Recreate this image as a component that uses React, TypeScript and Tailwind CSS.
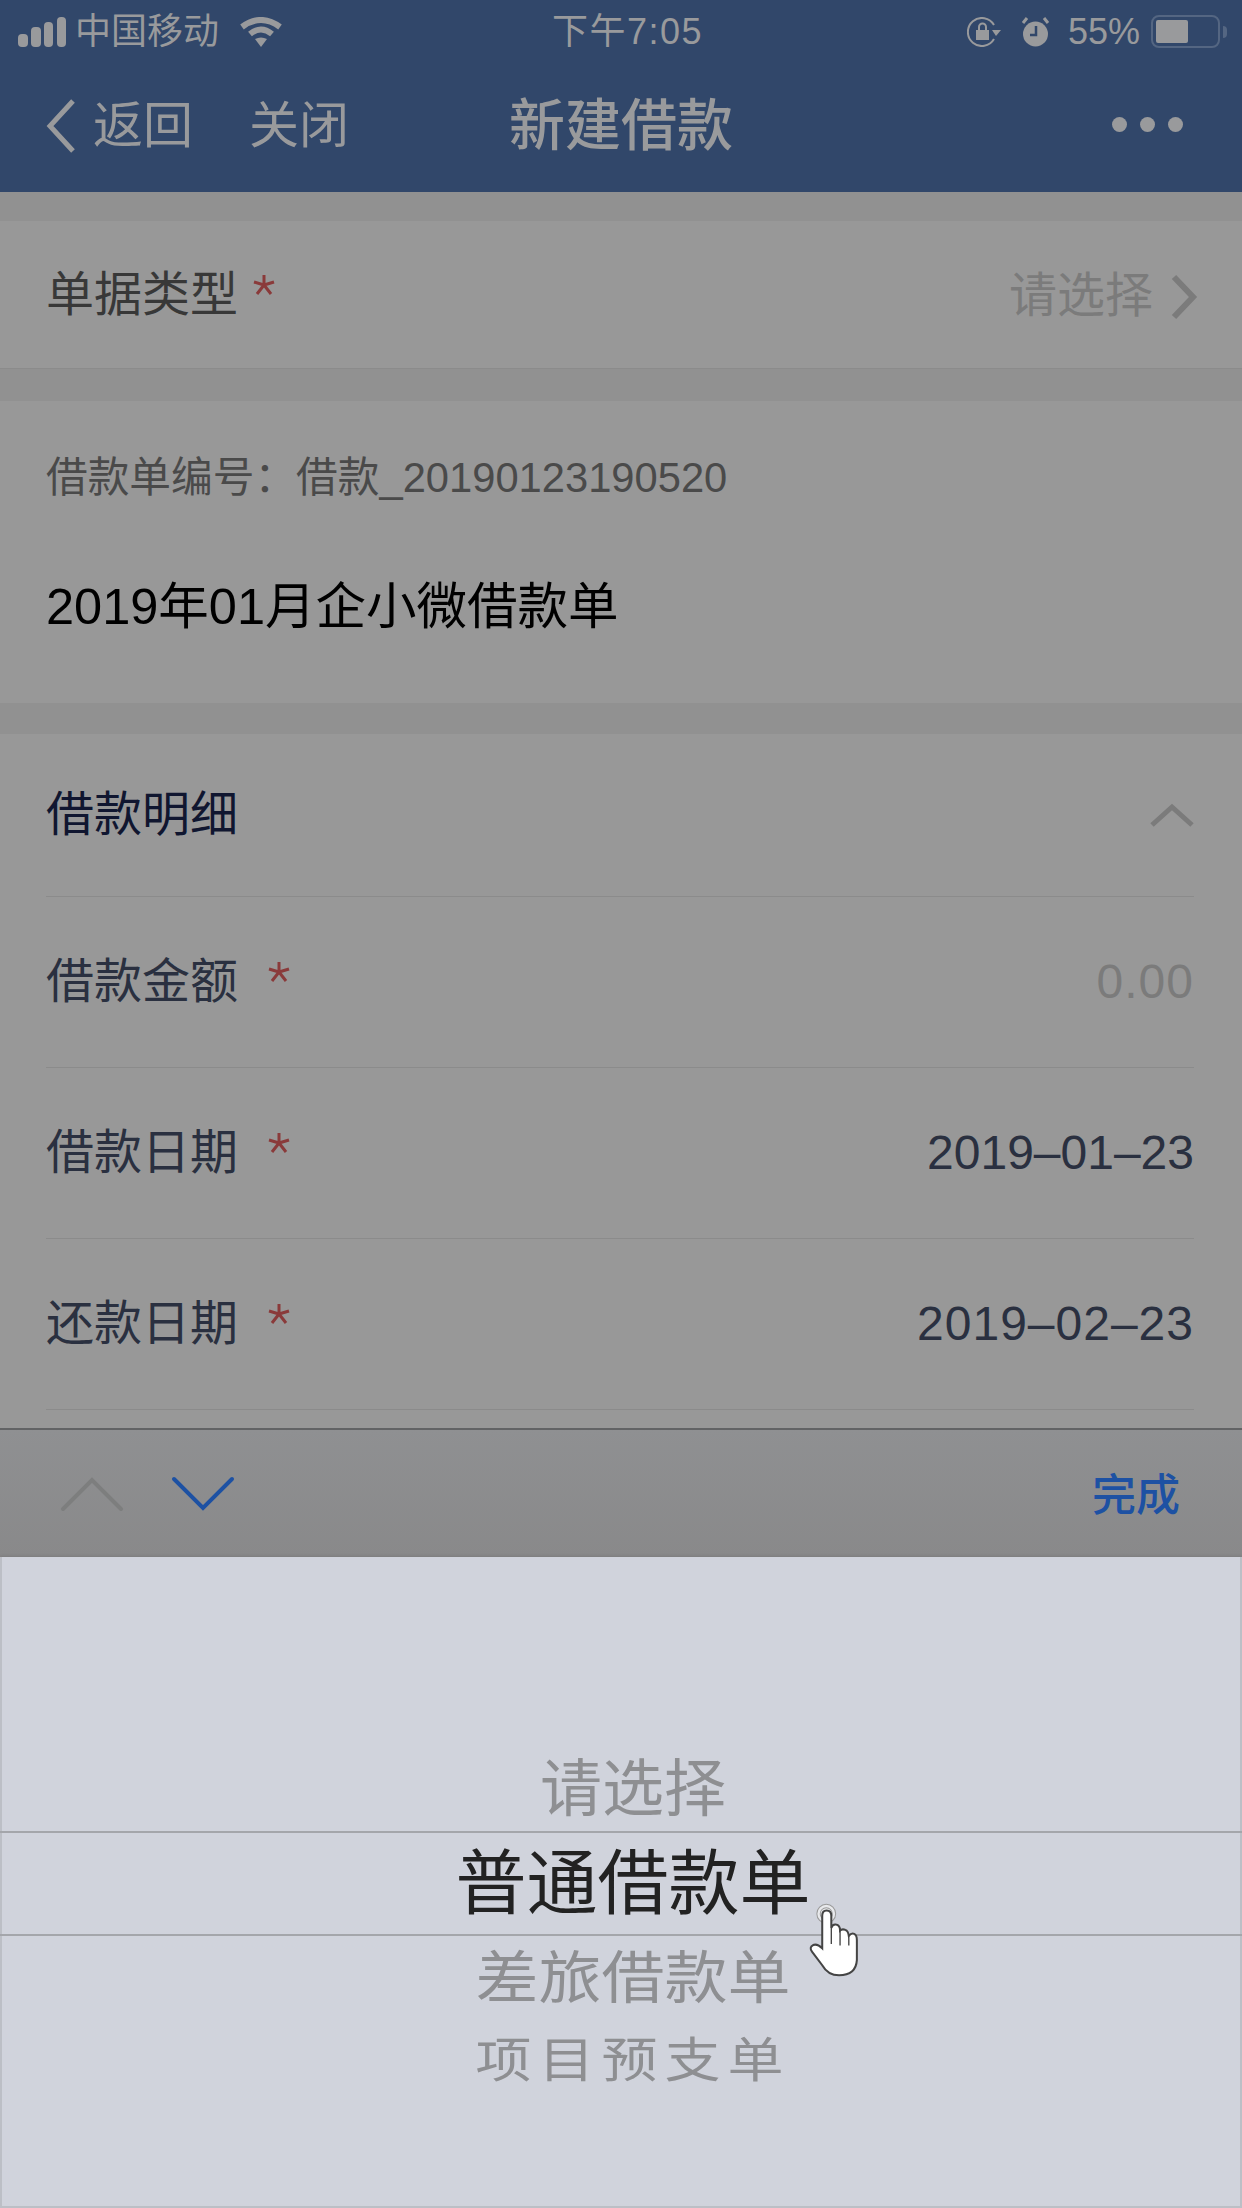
import React from 'react';

const font = { fontFamily: '"Liberation Sans", "Noto Sans CJK SC", sans-serif' };

function StatusBar() {
  return (
    <div className="flex h-[60px] items-center justify-between pl-[18px] pr-[15px] pt-[3px] text-[36px] text-[#999a9c]">
      <div className="flex w-[310px] items-center">
        <svg width="48" height="30" viewBox="0 0 48 30" className="mr-[9px]">
          <rect x="0" y="17" width="10" height="13" rx="4" fill="#999a9c" />
          <rect x="13" y="10" width="10" height="20" rx="4" fill="#999a9c" />
          <rect x="26" y="5" width="9" height="25" rx="4" fill="#999a9c" />
          <rect x="39" y="0" width="9" height="30" rx="4" fill="#999a9c" />
        </svg>
        <span>中国移动</span>
        <svg width="42" height="30" viewBox="0 0 42 30" className="ml-[21px]" fill="none" stroke="#999a9c" strokeWidth="6">
          <path d="M2 10 Q21 -4 40 10" />
          <path d="M10 17 Q21 8 32 17" />
          <path d="M15 22 L21 30 L27 22 Q21 19 15 22 Z" fill="#999a9c" stroke="none" />
        </svg>
      </div>
      <div className="text-[36px] tracking-[1.5px]">下午7:05</div>
      <div className="flex w-[300px] items-center justify-end">
        <svg width="34" height="30" viewBox="0 0 34 30" fill="none" stroke="#999a9c" strokeWidth="2">
          <path d="M27 22 A14 14 0 1 1 27 8" />
          <path d="M25 13 L34 13 L29 19 Z" fill="#999a9c" stroke="none" />
          <rect x="9" y="13" width="13" height="10" fill="#999a9c" stroke="none" />
          <path d="M12 13 V10 A3.5 3.5 0 0 1 19 10 V13" />
        </svg>
        <svg width="29" height="30" viewBox="0 0 29 30" className="ml-[20px]">
          <circle cx="14.5" cy="17" r="12.5" fill="#999a9c" />
          <path d="M2 6 L6 1 M27 6 L23 1" stroke="#999a9c" strokeWidth="3" />
          <path d="M15 9 V18 H9" stroke="#31476a" strokeWidth="2.5" fill="none" />
        </svg>
        <span className="ml-[18px] text-[36px]">55%</span>
        <div className="ml-[11px] flex items-center">
          <div className="h-[33px] w-[69px] rounded-[8px] border-[2px] border-[#546682] p-[3px]">
            <div className="h-full w-[32px] rounded-[2px] bg-[#999a9c]" />
          </div>
          <div className="ml-[3px] h-[12px] w-[4px] rounded-r-full bg-[#546682]" />
        </div>
      </div>
    </div>
  );
}

function NavBar() {
  return (
    <div className="flex h-[132px] items-center pl-[44px] pr-[59px] text-[#999a9c]">
      <svg width="32" height="56" viewBox="0 0 32 56" fill="none" stroke="#999a9c" strokeWidth="5">
        <path d="M29 3 L6 28 L29 53" />
      </svg>
      <span className="ml-[17px] text-[50px] leading-none">返回</span>
      <span className="ml-[56px] text-[50px] leading-none">关闭</span>
      <span className="ml-[160px] text-[56px] font-medium leading-none">新建借款</span>
      <div className="-mt-[4px] ml-auto flex gap-[13px]">
        <div className="h-[15px] w-[15px] rounded-full bg-[#999a9c]" />
        <div className="h-[15px] w-[15px] rounded-full bg-[#999a9c]" />
        <div className="h-[15px] w-[15px] rounded-full bg-[#999a9c]" />
      </div>
    </div>
  );
}

function Star({ ml }: { ml: string }) {
  return (
    <svg width="22" height="22" viewBox="0 0 22 22" fill="none" stroke="#8a3a3a" strokeWidth="3" className={ml}>
      <path d="M11 1 V11 M1 8 L11 11 M21 8 L11 11 M4 20 L11 11 M18 20 L11 11" />
    </svg>
  );
}

function FormRow({ label, value, muted, tracking }: { label: string; value: string; muted?: boolean; tracking?: string }) {
  return (
    <div className="flex h-[171px] items-center justify-between border-t-[1px] border-[#8b8b8b]">
      <div className="flex items-center">
        <span className="text-[48px] text-[#2a3040]">{label}</span>
        <Star ml="ml-[30px] -mt-[20px]" />
      </div>
      <span className={`text-[48px] ${tracking ?? ''} ${muted ? 'text-[#7b7b7b]' : 'text-[#2a3040]'}`}>{value}</span>
    </div>
  );
}

function Toolbar() {
  return (
    <div className="flex h-[129px] items-center justify-between border-t-[2px] border-[#626365] bg-gradient-to-b from-[#8f9092] to-[#89898a] pl-[60px] pr-[62px]">
      <div className="flex items-center gap-[47px]">
        <svg width="64" height="36" viewBox="0 0 64 36" fill="none" stroke="#7d7e7e" strokeWidth="4" strokeLinecap="round">
          <path d="M3 33 L32 4 L61 33" />
        </svg>
        <svg width="64" height="36" viewBox="0 0 64 36" fill="none" stroke="#1d51a3" strokeWidth="4" strokeLinecap="round">
          <path d="M3 3 L32 32 L61 3" />
        </svg>
      </div>
      <span className="mt-[4px] text-[44px] font-medium text-[#1d51a3]">完成</span>
    </div>
  );
}

function HandCursor() {
  return (
    <svg width="54" height="74" viewBox="200 190 160 220" className="absolute left-[807px] top-[1903px]">
      <circle cx="257" cy="222" r="28" fill="#e8e9ec" stroke="#9a9a9a" strokeWidth="3" />
      <circle cx="257" cy="222" r="18" fill="none" stroke="#9a9a9a" strokeWidth="3" />
      <path
        d="M245 325 L245 228 Q245 212 258 212 Q272 212 272 228 L272 264 Q276 252 286 254 Q298 256 298 272 Q304 266 314 270 Q322 272 324 288 Q332 278 340 282 Q348 286 348 300 L348 360 Q345 405 295 405 Q262 405 245 375 L215 335 Q205 322 218 315 Q230 310 245 325 Z"
        fill="#ffffff"
        stroke="#444444"
        strokeWidth="6"
      />
      <path d="M272 264 V312 M298 272 V316 M324 288 V316" stroke="#444444" strokeWidth="4" fill="none" />
    </svg>
  );
}

function Picker() {
  return (
    <div className="flex h-[651px] flex-col items-center border-[2px] border-t-0 border-[#bcbfc6] bg-[#d0d3dc] pl-[24px] shadow-[0_-1px_3px_rgba(0,0,0,0.1)]">
      <div className="flex h-[274px] w-full items-end justify-center pb-[10px]">
        <span className="text-[62px] leading-none text-[#8e8f92]">请选择</span>
      </div>
      <div className="-ml-[24px] flex h-[105px] w-[calc(100%+28px)] shrink-0 items-center justify-center border-y-[2px] border-[#a4a6ab] pl-[24px]">
        <span className="text-[71px] leading-none text-[#222222]">普通借款单</span>
      </div>
      <span className="mt-[14px] origin-top scale-y-[0.9] text-[63px] leading-none text-[#8e8f92]">差旅借款单</span>
      <span className="mt-[24px] origin-top scale-y-[0.85] text-[56px] tracking-[7px] leading-none text-[#8e8f92]">项目预支单</span>
    </div>
  );
}

export default function App() {
  return (
    <div className="relative h-[2208px] w-[1242px] overflow-hidden bg-[#919191]" style={font}>
      <div className="bg-[#31476a]">
        <StatusBar />
        <NavBar />
      </div>

      <div className="mt-[29px] flex h-[148px] items-center justify-between border-b-[1px] border-[#8b8b8b] bg-[#989898] pl-[46px] pr-[44px]">
        <div className="flex items-center">
          <span className="text-[48px] text-[#383838]">单据类型</span>
          <Star ml="ml-[15px] -mt-[20px]" />
        </div>
        <div className="flex items-center">
          <span className="pt-[3px] text-[48px] text-[#7b7b7b]">请选择</span>
          <svg width="28" height="46" viewBox="0 0 28 46" fill="none" stroke="#7b7b7b" strokeWidth="6" className="ml-[17px] mt-[4px]">
            <path d="M4 3 L23 23 L4 43" />
          </svg>
        </div>
      </div>

      <div className="mt-[32px] h-[302px] bg-[#989898] pl-[46px]">
        <div className="pt-[47px] text-[41.7px] leading-[60px] text-[#4a4a4a]">借款单编号：借款_20190123190520</div>
        <div className="mt-[67px] text-[50.5px] leading-[64px] text-[#000000]">2019年01月企小微借款单</div>
      </div>

      <div className="mt-[31px] h-[694px] bg-[#989898] pl-[46px] pr-[48px]">
        <div className="flex h-[162px] items-center justify-between">
          <span className="text-[48px] text-[#101630]">借款明细</span>
          <svg width="44" height="24" viewBox="0 0 44 24" fill="none" stroke="#7b7b7b" strokeWidth="5">
            <path d="M2 22 L22 4 L42 22" />
          </svg>
        </div>
        <FormRow label="借款金额" value="0.00" muted tracking="tracking-[1px]" />
        <FormRow label="借款日期" value="2019–01–23" />
        <FormRow label="还款日期" value="2019–02–23" tracking="tracking-[1px]" />
        <div className="border-t-[1px] border-[#8b8b8b]" />
      </div>

      <Toolbar />
      <Picker />
      <HandCursor />
    </div>
  );
}
